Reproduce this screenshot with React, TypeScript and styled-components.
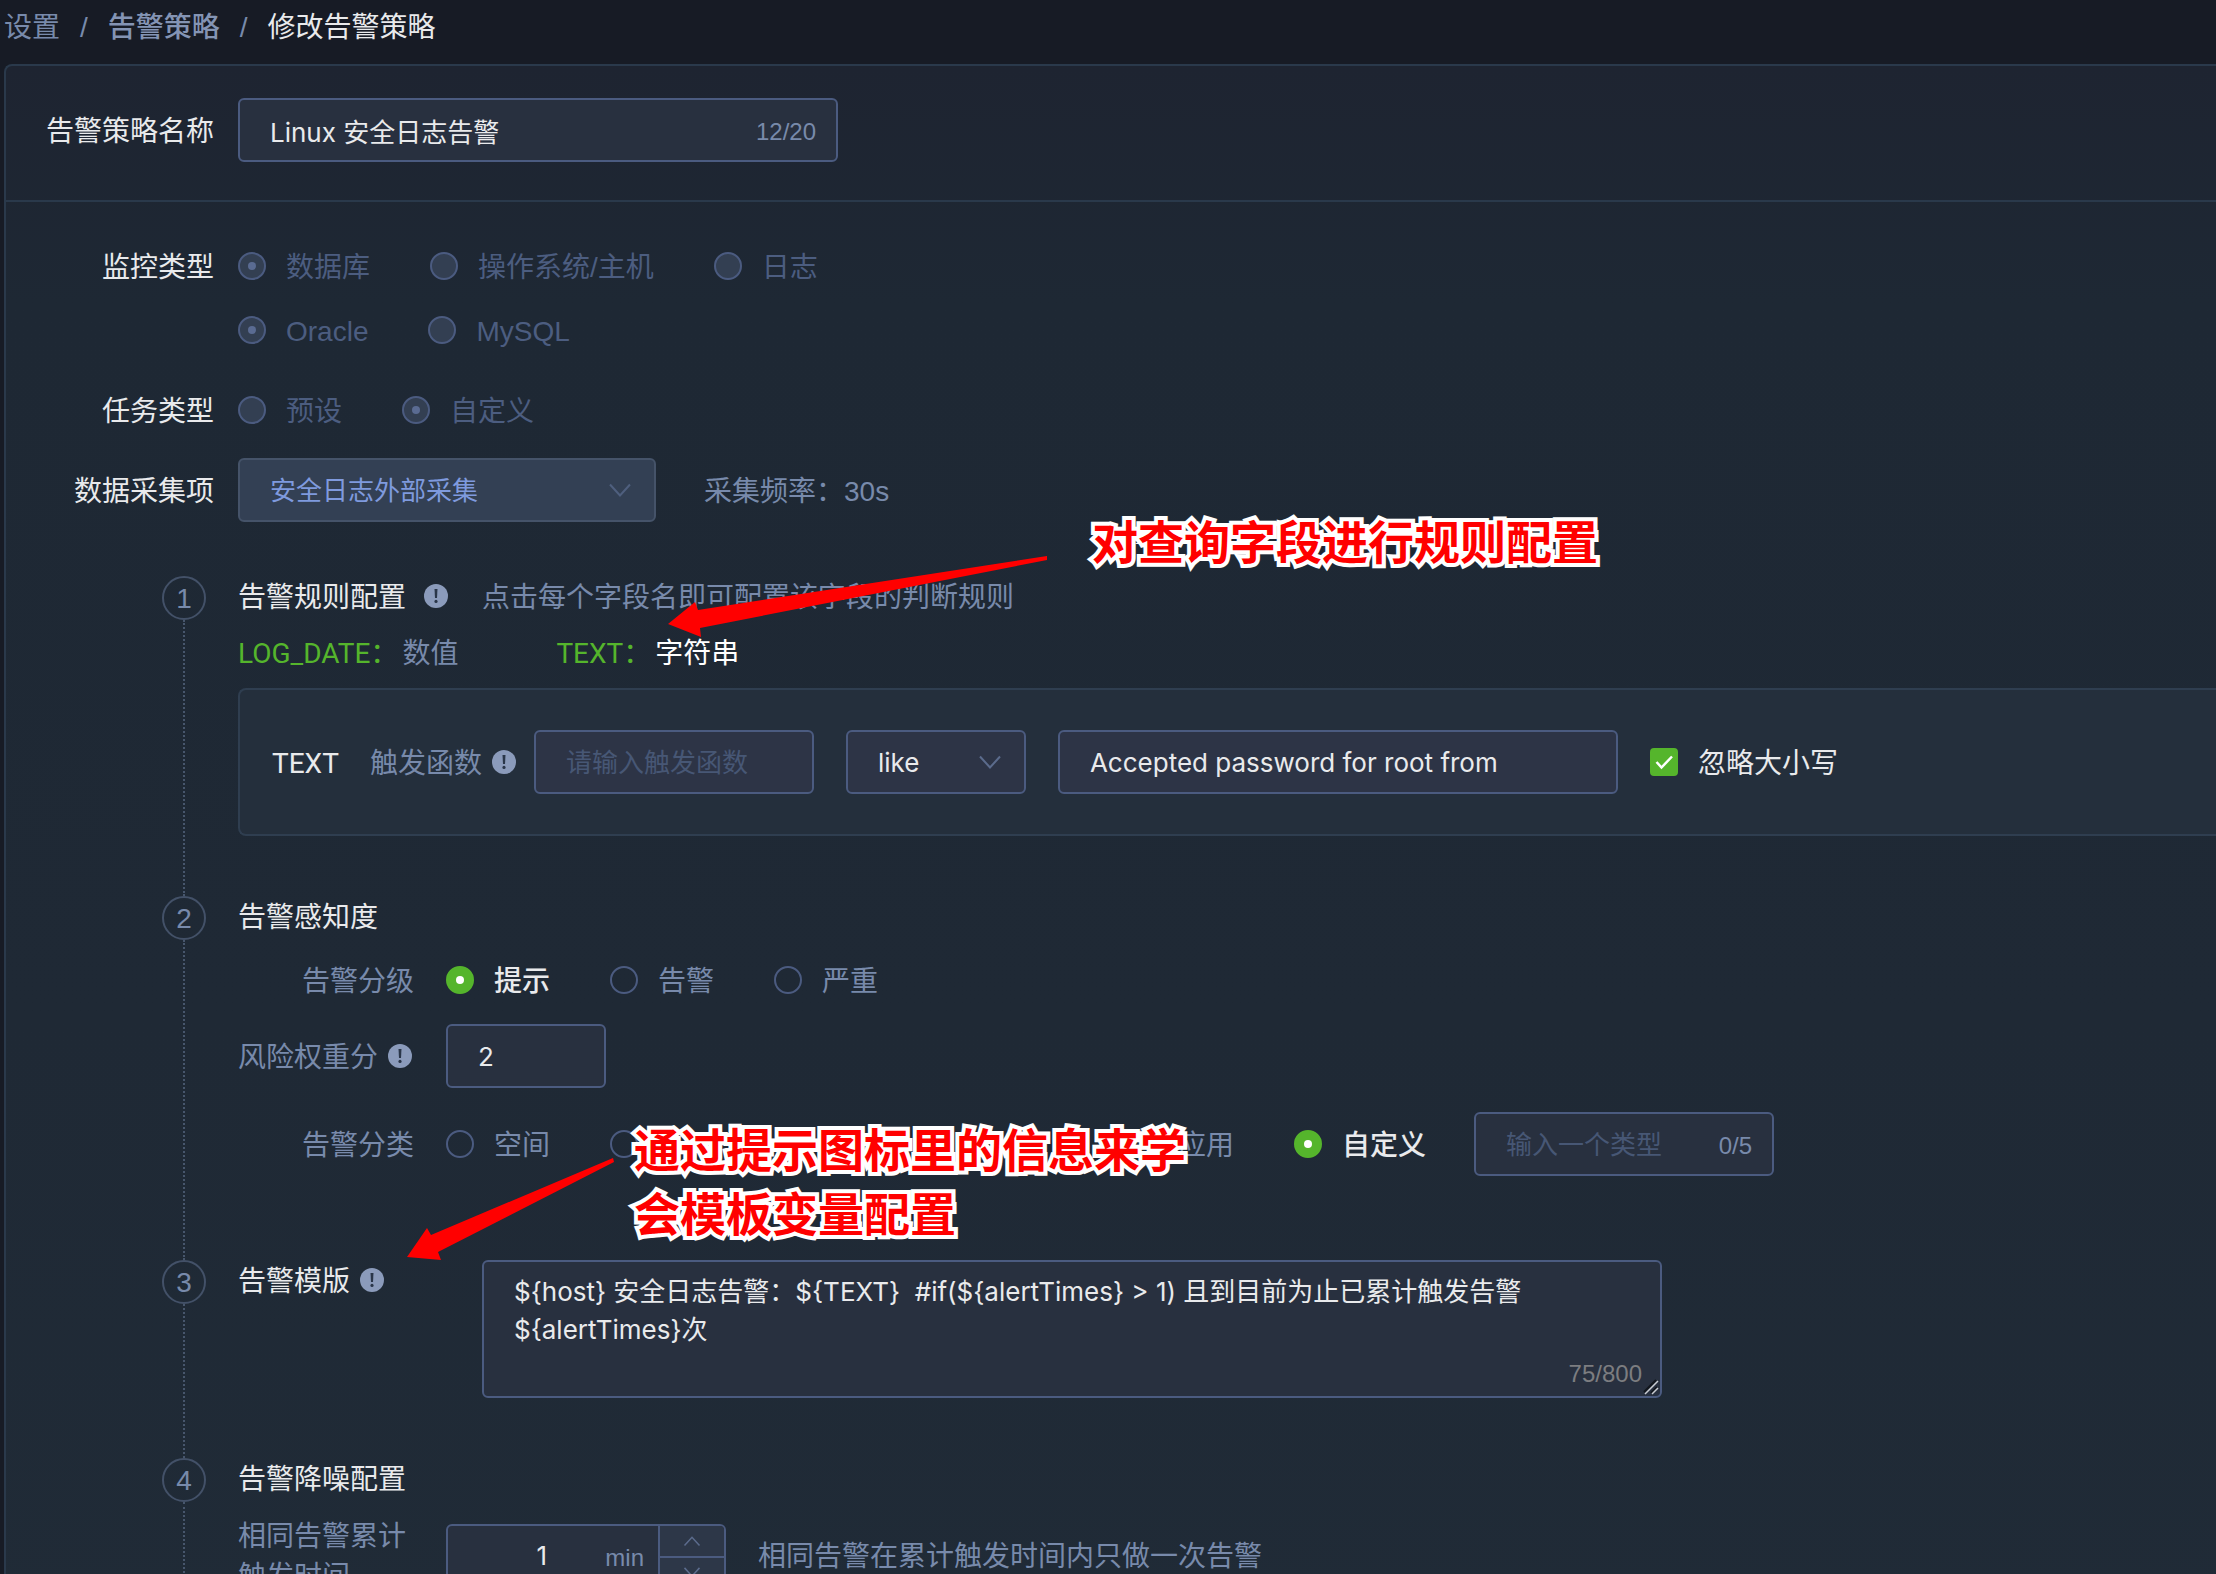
import React, { useState } from 'react';
import styled, { createGlobalStyle, css } from 'styled-components';

const color = {
  page: '#171b25',
  text: '#e9eaec',
  muted: '#788aab',
  faint: '#475775',
  disabled: '#4c5d80',
  line: '#2a394b',
  field: '#4b5b80',
  green: '#55b52c',
  icon: '#8b9bbb',
};

const uiFont = '"Liberation Sans", "Noto Sans CJK SC", sans-serif';
const keyFont = 'Roboto, "Noto Sans CJK SC", sans-serif';
const fieldFont = 'Inter, "Noto Sans CJK SC", sans-serif';

const GlobalStyle = createGlobalStyle`
  *, *::before, *::after { box-sizing: border-box; }
  body {
    margin: 0;
    background: ${color.page};
    color: ${color.text};
    font: 28px/40px ${uiFont};
  }
`;

const Page = styled.main`
  position: relative;
  display: flex;
  flex-direction: column;
  height: 100vh;
  overflow: hidden;
`;

const Breadcrumb = styled.nav`
  display: flex;
  flex: none;
  gap: 20px;
  padding: 8px 4px 16px;
  color: ${color.muted};
`;

const Crumb = styled.a<{ $strong?: boolean }>`
  color: ${(p) => (p.$strong ? '#8494b4' : color.muted)};
  font-weight: ${(p) => (p.$strong ? 500 : 400)};
  text-decoration: none;
`;

const Current = styled.span`
  color: ${color.text};
`;

const Card = styled.form`
  flex: none;
  margin-left: 4px;
  border: 2px solid ${color.line};
  border-right: 0;
  border-radius: 8px 0 0 8px;
  background: linear-gradient(#1e2431, #1e2834 15%, #1f2935 60%, #202b37);
`;

const NameSection = styled.section`
  padding: 32px 0 38px;
  border-bottom: 2px solid ${color.line};
`;

const Settings = styled.section`
  display: flex;
  flex-direction: column;
  gap: 16px;
  padding: 32px 0 54px;
`;

const FormRow = styled.div`
  display: grid;
  grid-template-columns: 208px 1fr;
  column-gap: 24px;
`;

const FormLabel = styled.label`
  height: 64px;
  padding-top: 2px;
  line-height: 64px;
  text-align: right;
`;

const Inline = styled.div<{ $gap?: number }>`
  display: flex;
  align-items: center;
  gap: ${(p) => p.$gap ?? 0}px;
`;

/* Ideographs sit high in the line box, so a run beside an icon or a field is padded at its top. */
const Run = styled.span`
  padding-top: 3px;
`;

const Muted = styled(Run)`
  color: ${color.muted};
`;

const Options = styled.div`
  display: flex;
  align-items: center;
  gap: 60px;
  height: 64px;
`;

const Option = styled.label<{ $off?: boolean; $on?: boolean }>`
  display: flex;
  align-items: center;
  gap: 20px;
  white-space: nowrap;
  color: ${(p) => (p.$off ? color.disabled : p.$on ? color.text : color.muted)};
  font-weight: ${(p) => (p.$on ? 500 : 400)};
`;

const OptionText = styled(Run)<{ $reserve?: number }>`
  min-width: ${(p) => p.$reserve ?? 0}px;
`;

const RadioInput = styled.input`
  appearance: none;
  display: grid;
  place-items: center;
  flex: none;
  width: 28px;
  height: 28px;
  margin: 0;
  border: 2px solid ${color.field};
  border-radius: 50%;

  &:checked::before {
    content: '';
    width: 8px;
    height: 8px;
    border-radius: 50%;
    background: #fff;
  }
  &:checked {
    border-color: ${color.green};
    background: ${color.green};
  }
  &:disabled {
    border-color: ${color.field};
    background: #333f52;
  }
  &:disabled::before {
    background: #5a6b92;
  }
`;

const CheckLabel = styled.label`
  display: flex;
  align-items: center;
  gap: 20px;
`;

const CheckBoxWrap = styled.span`
  display: grid;
  width: 28px;
  height: 28px;

  > * {
    grid-area: 1 / 1;
  }
  > svg {
    pointer-events: none;
  }
`;

const CheckInput = styled.input`
  appearance: none;
  width: 28px;
  height: 28px;
  margin: 0;
  border: 2px solid ${color.field};
  border-radius: 4px;

  &:checked {
    border-color: ${color.green};
    background: ${color.green};
  }
`;

const fieldBox = css`
  border: 2px solid ${color.field};
  border-radius: 6px;
  background: #28303f;
`;

const Field = styled.span<{ $width: number; $raised?: boolean }>`
  ${fieldBox}
  display: flex;
  align-items: center;
  flex: none;
  width: ${(p) => p.$width}px;
  height: 64px;
  padding: 0 20px 0 30px;
  ${(p) => p.$raised && 'background: #2d3446;'}
`;

const TextInput = styled.input`
  flex: 1;
  min-width: 0;
  width: 100%;
  height: 60px;
  padding: 0;
  border: 0;
  outline: 0;
  background: none;
  color: ${color.text};
  font: 26px/38px ${fieldFont};

  &::placeholder {
    color: ${color.faint};
    opacity: 1;
  }
`;

const Count = styled(Run)`
  color: ${color.muted};
  font-size: 24px;
`;

const SelectWrap = styled.span<{ $width: number }>`
  display: grid;
  flex: none;
  align-items: center;
  width: ${(p) => p.$width}px;

  > * {
    grid-area: 1 / 1;
  }
  > svg {
    justify-self: end;
    margin-right: 24px;
    pointer-events: none;
  }
`;

const Select = styled.select`
  ${fieldBox}
  appearance: none;
  width: 100%;
  height: 64px;
  padding: 2px 30px 0;
  background: #2d3446;
  color: ${color.text};
  font: 26px/38px ${fieldFont};

  &:disabled {
    border-color: #455369;
    background: #334054;
    color: #7f9ade;
    opacity: 1;
  }
`;

const Step = styled.section`
  display: grid;
  grid-template-columns: 44px 1fr;
  column-gap: 32px;
  padding-left: 156px;
`;

const Rail = styled.div`
  display: flex;
  flex-direction: column;
  align-items: center;

  &::after {
    content: '';
    flex: 1;
    border-left: 2px dotted #47566c;
  }
`;

const Marker = styled.span`
  width: 44px;
  height: 44px;
  border: 2px solid #435168;
  border-radius: 50%;
  color: ${color.muted};
  line-height: 42px;
  text-align: center;
`;

const StepBody = styled.div`
  min-width: 0;
  padding-bottom: 60px;
`;

const StepTitle = styled.h2`
  height: 40px;
  margin: 0;
  padding-top: 2px;
  font: inherit;
`;

const FieldList = styled.div`
  display: flex;
  gap: 98px;
  margin: 16px 0;
  height: 40px;
  padding-top: 2px;
`;

const FieldLink = styled.a<{ $active?: boolean }>`
  display: flex;
  gap: 4px;
  color: ${(p) => (p.$active ? '#fff' : color.muted)};
  font-family: ${keyFont};
  text-decoration: none;
`;

const FieldKey = styled.span`
  color: ${color.green};
`;

const RuleName = styled(Run)`
  font-family: ${keyFont};
`;

const RuleBox = styled.div`
  display: flex;
  align-items: center;
  gap: 32px;
  height: 148px;
  padding-left: 32px;
  border: 2px solid #2f3e50;
  border-right: 0;
  border-radius: 8px 0 0 8px;
  background: #242f3c;
`;

const SubRow = styled.div<{ $top: number; $bottom?: number }>`
  display: grid;
  grid-template-columns: 176px 1fr;
  column-gap: 32px;
  align-items: center;
  margin-top: ${(p) => p.$top}px;
  margin-bottom: ${(p) => p.$bottom ?? 0}px;
`;

const SubLabel = styled.label<{ $start?: boolean }>`
  display: flex;
  align-items: center;
  justify-content: ${(p) => (p.$start ? 'flex-start' : 'flex-end')};
  gap: 10px;
  color: ${color.muted};
`;

const TemplateRow = styled.div`
  display: grid;
  grid-template-columns: 244px minmax(0, 1180px);
  align-items: start;
`;

const AreaWrap = styled.div`
  position: relative;
  display: flex;
`;

const TextArea = styled.textarea`
  ${fieldBox}
  flex: 1;
  height: 138px;
  padding: 11px 30px;
  resize: none;
  outline: 0;
  color: ${color.text};
  font: 26px/38px ${fieldFont};
`;

const AreaCount = styled.span`
  position: absolute;
  right: 20px;
  bottom: 4px;
  color: #7c7d80;
  font-size: 24px;
`;

const Grip = styled.svg`
  position: absolute;
  right: 3px;
  bottom: 3px;
`;

const NumberBox = styled.span`
  ${fieldBox}
  display: flex;
  width: 280px;
  height: 64px;
  overflow: hidden;
`;

const NumberInput = styled(TextInput)`
  padding-left: 30px;
  text-align: center;
`;

const Unit = styled.span`
  padding-right: 14px;
  color: ${color.muted};
  font-size: 24px;
  line-height: 64px;
`;

const Spinner = styled.span`
  display: grid;
  grid-template-rows: 1fr 1fr;
  width: 66px;
  border-left: 2px solid ${color.field};
`;

const SpinButton = styled.button`
  display: grid;
  place-items: center;
  padding: 0;
  border: 0;
  background: #2d3748;

  & + & {
    border-top: 2px solid ${color.field};
  }
`;

const Annotations = styled.div`
  position: absolute;
  inset: 0;
  pointer-events: none;
`;

const Arrows = styled.svg`
  position: absolute;
  left: 0;
  top: 0;
`;

const Note = styled.p<{ $x: number; $y: number }>`
  position: absolute;
  left: ${(p) => p.$x}px;
  top: ${(p) => p.$y}px;
  margin: 0;
  color: #ff0000;
  font: 700 46px/64px "Noto Sans CJK SC", sans-serif;
  white-space: pre;
  -webkit-text-stroke: 8px #fff;
  paint-order: stroke fill;
`;

const InfoIcon = () => (
  <svg width="24" height="24" viewBox="0 0 24 24" aria-hidden="true">
    <circle cx="12" cy="12" r="12" fill={color.icon} />
    <path d="M10.500 5h3l-.5 9h-2z" fill="#2a3649" />
    <circle cx="12" cy="17.400" r="1.600" fill="#2a3649" />
  </svg>
);

type ChevronProps = { up?: boolean; size?: number; dim?: boolean };

const Chevron = ({ up, size = 24, dim }: ChevronProps) => (
  <svg width={size} height={size} viewBox="0 0 24 24" fill="none" aria-hidden="true">
    <path
      d={up ? 'M2 18 12 7l10 11' : 'M2 6.500 12 17.500l10-11'}
      stroke={dim ? '#4f5f7e' : '#5b6b8c'}
      strokeWidth="2"
    />
  </svg>
);

type RadioItem = { value: string; label?: string; reserve?: number };

type RadioGroupProps = {
  name: string;
  items: RadioItem[];
  initial: string;
  disabled?: boolean;
};

const RadioGroup = ({ name, items, initial, disabled }: RadioGroupProps) => {
  const [value, setValue] = useState(initial);
  return (
    <Options role="radiogroup">
      {items.map((item) => (
        <Option key={item.value} $off={disabled} $on={!disabled && value === item.value}>
          <RadioInput
            type="radio"
            name={name}
            value={item.value}
            aria-label={item.label ?? item.value}
            checked={value === item.value}
            disabled={disabled}
            onChange={() => setValue(item.value)}
          />
          <OptionText $reserve={item.reserve}>{item.label}</OptionText>
        </Option>
      ))}
    </Options>
  );
};

const monitorTypes = [
  { label: '数据库', value: 'db' },
  { label: '操作系统/主机', value: 'os' },
  { label: '日志', value: 'log' },
];
const databases = [
  { label: 'Oracle', value: 'oracle' },
  { label: 'MySQL', value: 'mysql' },
];
const taskTypes = [
  { label: '预设', value: 'preset' },
  { label: '自定义', value: 'custom' },
];
const levels = [
  { label: '提示', value: 'info' },
  { label: '告警', value: 'warn' },
  { label: '严重', value: 'critical' },
];
const categories = [
  { label: '空间', value: 'space' },
  { value: 'other', reserve: 412 },
  { label: '应用', value: 'application' },
  { label: '自定义', value: 'custom' },
];

const template =
  '${host} 安全日志告警：${TEXT}  #if(${alertTimes} > 1) 且到目前为止已累计触发告警${alertTimes}次';

const StepBlock = ({ index, children }: { index: number; children: React.ReactNode }) => (
  <Step>
    <Rail>
      <Marker>{index}</Marker>
    </Rail>
    <StepBody>{children}</StepBody>
  </Step>
);

export default function App() {
  const [minutes, setMinutes] = useState(1);
  return (
    <Page>
      <GlobalStyle />
      <Breadcrumb>
        <Crumb href="#settings">设置</Crumb>
        <span>/</span>
        <Crumb href="#policies" $strong>告警策略</Crumb>
        <span>/</span>
        <Current>修改告警策略</Current>
      </Breadcrumb>

      <Card onSubmit={(e) => e.preventDefault()}>
        <NameSection>
          <FormRow>
            <FormLabel htmlFor="name">告警策略名称</FormLabel>
            <Field $width={600}>
              <TextInput id="name" defaultValue="Linux 安全日志告警" maxLength={20} />
              <Count>12/20</Count>
            </Field>
          </FormRow>
        </NameSection>

        <Settings>
          <FormRow>
            <FormLabel as="span">监控类型</FormLabel>
            <div>
              <RadioGroup name="monitor" items={monitorTypes} initial="db" disabled />
              <RadioGroup name="database" items={databases} initial="oracle" disabled />
            </div>
          </FormRow>
          <FormRow>
            <FormLabel as="span">任务类型</FormLabel>
            <RadioGroup name="task" items={taskTypes} initial="custom" disabled />
          </FormRow>
          <FormRow>
            <FormLabel htmlFor="source">数据采集项</FormLabel>
            <Inline $gap={48}>
              <SelectWrap $width={418}>
                <Select id="source" disabled>
                  <option>安全日志外部采集</option>
                </Select>
                <Chevron dim />
              </SelectWrap>
              <Muted>采集频率：30s</Muted>
            </Inline>
          </FormRow>
        </Settings>

        <StepBlock index={1}>
          <Inline $gap={34}>
            <Inline $gap={18}>
              <StepTitle>告警规则配置</StepTitle>
              <InfoIcon />
            </Inline>
            <StepTitle as={Muted}>点击每个字段名即可配置该字段的判断规则</StepTitle>
          </Inline>
          <FieldList>
            <FieldLink href="#log-date">
              <FieldKey>LOG_DATE：</FieldKey>
              <span>数值</span>
            </FieldLink>
            <FieldLink href="#text" $active>
              <FieldKey>TEXT：</FieldKey>
              <span>字符串</span>
            </FieldLink>
          </FieldList>
          <RuleBox>
            <Inline $gap={18}>
              <Inline $gap={31}>
                <RuleName>TEXT</RuleName>
                <SubLabel htmlFor="fn">
                  <Run>触发函数</Run>
                  <InfoIcon />
                </SubLabel>
              </Inline>
              <Field $width={280} $raised>
                <TextInput id="fn" placeholder="请输入触发函数" />
              </Field>
            </Inline>
            <SelectWrap $width={180}>
              <Select aria-label="运算符">
                <option>like</option>
              </Select>
              <Chevron />
            </SelectWrap>
            <Field $width={560} $raised>
              <TextInput aria-label="匹配内容" defaultValue="Accepted password for root from" />
            </Field>
            <CheckLabel>
              <CheckBoxWrap>
                <CheckInput type="checkbox" defaultChecked />
                <svg width="28" height="28" viewBox="0 0 28 28" fill="none" aria-hidden="true">
                  <path d="M6.500 14l5 5.500L22 8.500" stroke="#fff" strokeWidth="2.500" />
                </svg>
              </CheckBoxWrap>
              <Run>忽略大小写</Run>
            </CheckLabel>
          </RuleBox>
        </StepBlock>

        <StepBlock index={2}>
          <StepTitle>告警感知度</StepTitle>
          <SubRow $top={12}>
            <SubLabel as="span">
              <Run>告警分级</Run>
            </SubLabel>
            <RadioGroup name="level" items={levels} initial="info" />
          </SubRow>
          <SubRow $top={12}>
            <SubLabel htmlFor="weight" $start>
              <Run>风险权重分</Run>
              <InfoIcon />
            </SubLabel>
            <Field $width={160}>
              <TextInput id="weight" defaultValue="2" />
            </Field>
          </SubRow>
          <SubRow $top={24} $bottom={24}>
            <SubLabel as="span">
              <Run>告警分类</Run>
            </SubLabel>
            <Inline $gap={48}>
              <RadioGroup name="category" items={categories} initial="custom" />
              <Field $width={300}>
                <TextInput aria-label="自定义类型" placeholder="输入一个类型" maxLength={5} />
                <Count>0/5</Count>
              </Field>
            </Inline>
          </SubRow>
        </StepBlock>

        <StepBlock index={3}>
          <TemplateRow>
            <Inline $gap={10}>
              <StepTitle>告警模版</StepTitle>
              <InfoIcon />
            </Inline>
            <AreaWrap>
              <TextArea aria-label="告警模版" defaultValue={template} />
              <AreaCount>75/800</AreaCount>
              <Grip width="16" height="16" viewBox="0 0 16 16" fill="none" aria-hidden="true">
                <path d="M1 13 13 1M8 14l6-6" stroke="#12161d" strokeWidth="2" />
                <path d="M2 15 15 2M9 15l6-6" stroke="#c9ccd2" strokeWidth="1.500" />
              </Grip>
            </AreaWrap>
          </TemplateRow>
        </StepBlock>

        <StepBlock index={4}>
          <StepTitle>告警降噪配置</StepTitle>
          <SubRow $top={16}>
            <SubLabel htmlFor="minutes" $start>
              <Run>
                相同告警累计
                <br />
                触发时间
              </Run>
            </SubLabel>
            <Inline $gap={32}>
              <NumberBox>
                <NumberInput
                  id="minutes"
                  value={minutes}
                  onChange={(e) => setMinutes(Number(e.target.value) || 0)}
                />
                <Unit>min</Unit>
                <Spinner>
                  <SpinButton type="button" aria-label="增加" onClick={() => setMinutes(minutes + 1)}>
                    <Chevron up size={18} />
                  </SpinButton>
                  <SpinButton type="button" aria-label="减少" onClick={() => setMinutes(Math.max(0, minutes - 1))}>
                    <Chevron size={18} />
                  </SpinButton>
                </Spinner>
              </NumberBox>
              <Muted>相同告警在累计触发时间内只做一次告警</Muted>
            </Inline>
          </SubRow>
        </StepBlock>
      </Card>

      <Annotations>
        <Arrows width="1100" height="1300" viewBox="0 0 1100 1300" fill="#ff0000" aria-hidden="true">
          <polygon points="1047,556 1047,560 700,628 701,637 668,624 695,602 698,610" />
          <polygon points="613,1158 614,1162 438,1252 441,1260 407,1257 427,1228 431,1235" />
        </Arrows>
        <Note $x={1092} $y={507}>对查询字段进行规则配置</Note>
        <Note $x={634} $y={1115}>{'通过提示图标里的信息来学\n会模板变量配置'}</Note>
      </Annotations>
    </Page>
  );
}
